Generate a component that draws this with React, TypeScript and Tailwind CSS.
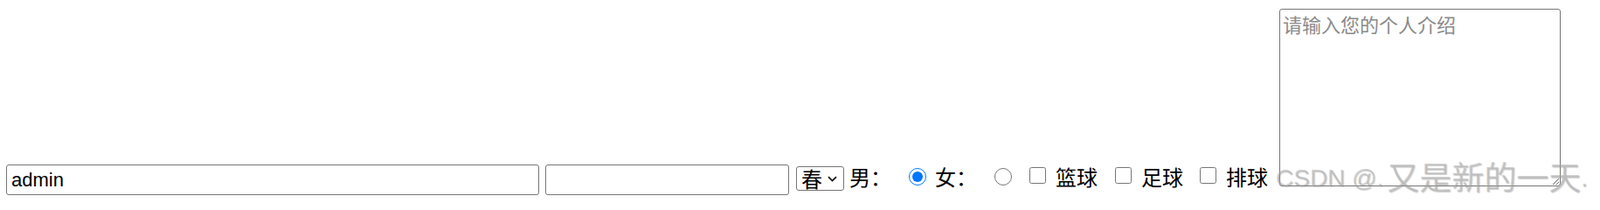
import React from "react";

const cjk = "font-['Noto_Sans_CJK_SC','Noto_Sans',sans-serif]";
const label = `${cjk} mt-[2px] text-[24px] leading-[24px] text-black whitespace-nowrap`;
const field =
  "h-[35px] border border-[#767676] rounded-[3px] bg-white pl-[5px] text-[22px] text-black font-['Liberation_Sans',Arial,sans-serif] outline-none";

const App = () => {
  return (
    <div className="relative h-[235px] w-full overflow-hidden bg-white">
      <div className="flex items-start pl-[7px] pt-[9px]">
        {/* form row */}
        <div className="mt-[179px] flex items-start">
          <input type="text" defaultValue="admin" className={`w-[610px] ${field}`} />
          <input type="password" className={`ml-[7px] w-[279px] ${field}`} />

          <div className="relative ml-[8px] mt-[2px] h-[28px] w-[55px]">
            <select
              className={`${cjk} h-full w-full appearance-none rounded-[3px] border border-[#767676] bg-white pl-[5px] text-[24px] leading-[26px] text-black outline-none`}
            >
              <option>春</option>
              <option>夏</option>
              <option>秋</option>
              <option>冬</option>
            </select>
            <svg
              className="pointer-events-none absolute left-[36px] top-[11px]"
              width="11"
              height="7"
              viewBox="0 0 11 7"
              fill="none"
            >
              <path d="M1 1.2L5.5 5.6L10 1.2" stroke="#111" strokeWidth="1.7" />
            </svg>
          </div>

          <span className={`ml-[6px] ${label}`}>男：</span>
          <input type="radio" name="sex" defaultChecked className="ml-[20px] mt-[4px] h-[20px] w-[20px]" />
          <span className={`ml-[10px] ${label}`}>女：</span>
          <input type="radio" name="sex" className="ml-[20px] mt-[4px] h-[20px] w-[20px]" />

          <input type="checkbox" className="ml-[20px] mt-[3px] h-[19px] w-[19px]" />
          <span className={`ml-[11px] ${label}`}>篮球</span>
          <input type="checkbox" className="ml-[20px] mt-[3px] h-[19px] w-[19px]" />
          <span className={`ml-[11px] ${label}`}>足球</span>
          <input type="checkbox" className="ml-[19px] mt-[3px] h-[19px] w-[19px]" />
          <span className={`ml-[11px] ${label}`}>排球</span>
        </div>

        <textarea
          placeholder="请输入您的个人介绍"
          className={`${cjk} ml-[13px] mt-[1px] h-[203px] w-[322px] resize rounded-[3px] border border-[#767676] bg-white px-[3px] pt-[3px] text-[22px] leading-[26px] text-black outline-none placeholder:text-[#8a8a8a]`}
        />
      </div>

      {/* watermark */}
      <div className="pointer-events-none absolute left-[1460px] top-[179px] flex items-baseline whitespace-nowrap text-[rgba(170,170,170,0.5)] [text-shadow:1px_1px_1px_rgba(120,120,120,0.35)]">
        <span className="font-['Liberation_Sans',Arial,sans-serif] text-[28px] leading-[28px]">CSDN @.</span>
        <span className={`${cjk} relative top-[4px] ml-[4px] text-[37px] leading-[37px]`}>又是新的一天</span>
        <span className="font-['Liberation_Sans',Arial,sans-serif] text-[28px] leading-[28px]">.</span>
      </div>
    </div>
  );
};

export default App;
